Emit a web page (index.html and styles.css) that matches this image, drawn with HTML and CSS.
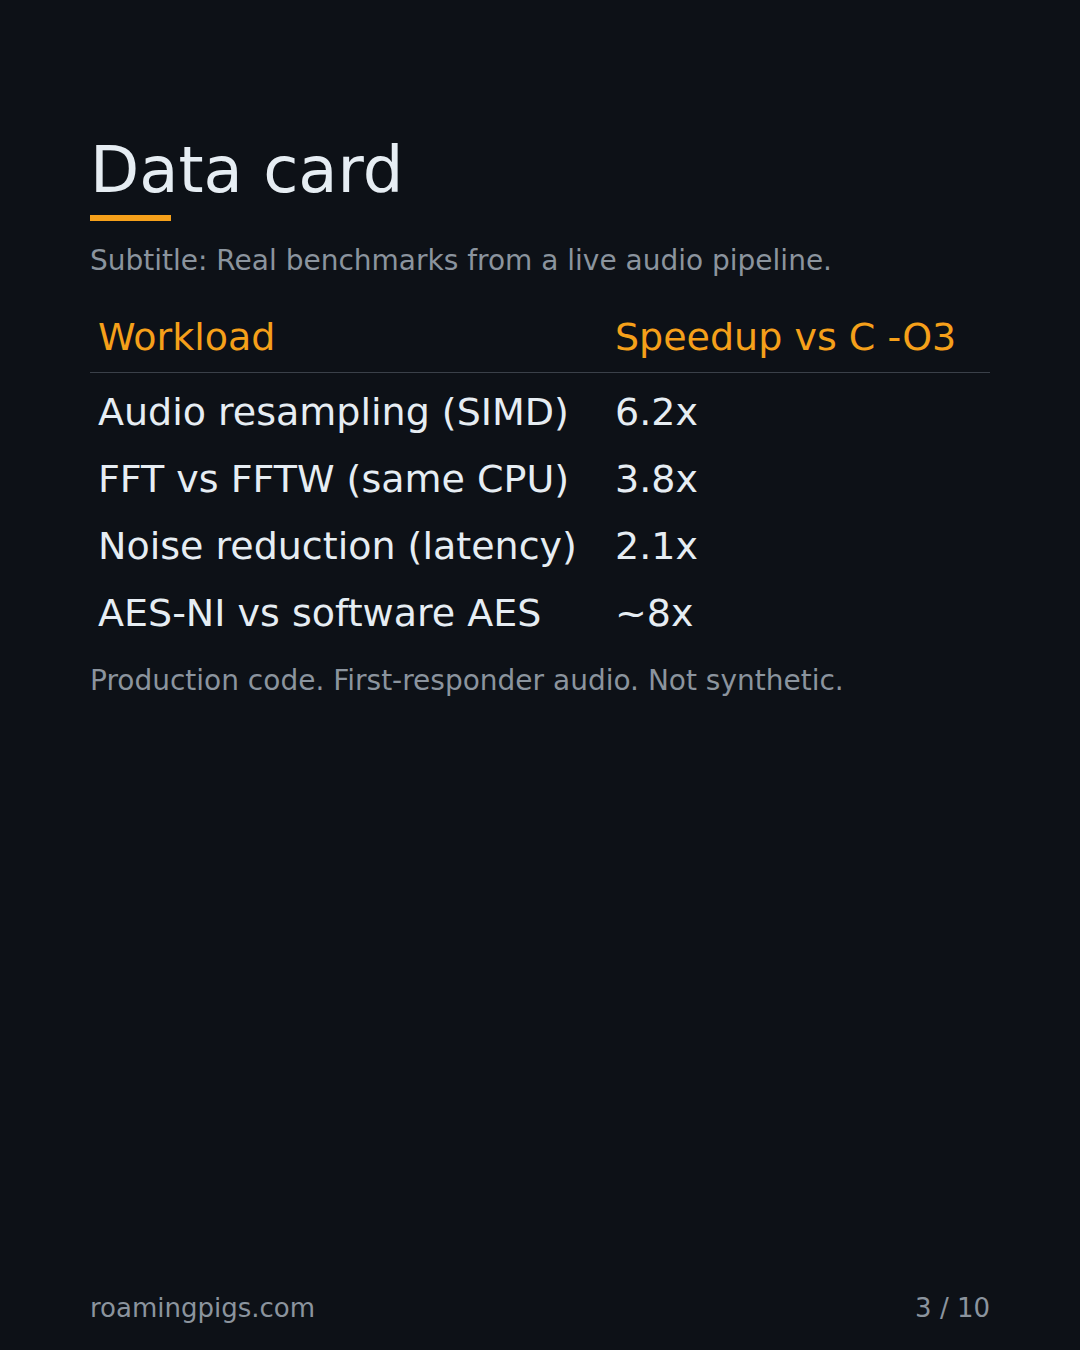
FILE: index.html
```html
<!DOCTYPE html>
<html lang="en">
<head>
<meta charset="utf-8">
<title>Data card</title>
<link rel="stylesheet" href="styles.css">
</head>
<body>
<main class="slide">
  <section class="content">
    <h1 class="title">Data card</h1>
    <div class="accent"></div>
    <p class="subtitle">Subtitle: Real benchmarks from a live audio pipeline.</p>
    <div class="table">
      <div class="row head">
        <div class="cell">Workload</div>
        <div class="cell">Speedup vs C -O3</div>
      </div>
      <div class="body">
        <div class="row">
          <div class="cell">Audio resampling (SIMD)</div>
          <div class="cell">6.2x</div>
        </div>
        <div class="row">
          <div class="cell">FFT vs FFTW (same CPU)</div>
          <div class="cell">3.8x</div>
        </div>
        <div class="row">
          <div class="cell">Noise reduction (latency)</div>
          <div class="cell">2.1x</div>
        </div>
        <div class="row">
          <div class="cell">AES-NI vs software AES</div>
          <div class="cell">~8x</div>
        </div>
      </div>
    </div>
    <p class="note">Production code. First-responder audio. Not synthetic.</p>
  </section>
  <footer class="footer">
    <span>roamingpigs.com</span>
    <span>3 / 10</span>
  </footer>
</main>
</body>
</html>
```

FILE: styles.css
```css
* { box-sizing: border-box; }
html, body {
  margin: 0;
  padding: 0;
  background: #0d1117;
}
body {
  font-family: "DejaVu Sans", sans-serif;
  color: #e6edf3;
}
.slide {
  width: 1080px;
  height: 1350px;
  padding: 138px 90px 0 90px;
  display: flex;
  flex-direction: column;
}
.title {
  margin: 0;
  font-size: 64px;
  font-weight: normal;
  line-height: 64px;
  color: #e6edf3;
}
.accent {
  margin-top: 13px;
  width: 81px;
  height: 6px;
  background: #f5a01a;
}
.subtitle {
  margin: 23px 0 0 0;
  font-size: 28px;
  line-height: 33px;
  color: #8b949e;
}
.table {
  margin-top: 29px;
  display: flex;
  flex-direction: column;
}
.row {
  display: grid;
  grid-template-columns: 517px 1fr;
  font-size: 38px;
  line-height: 45px;
  padding: 11px 0;
}
.row.head {
  color: #f5a01a;
  border-bottom: 1px solid #3a4049;
  padding: 9px 0 12px 0;
}
.body {
  padding-top: 6px;
}
.cell {
  padding: 0 8px;
  white-space: nowrap;
}
.note {
  margin: 17px 0 0 0;
  font-size: 28px;
  line-height: 33px;
  color: #8b949e;
}
.footer {
  margin-top: auto;
  margin-bottom: 26px;
  display: flex;
  justify-content: space-between;
  font-size: 26px;
  line-height: 31px;
  color: #8b949e;
}
```
